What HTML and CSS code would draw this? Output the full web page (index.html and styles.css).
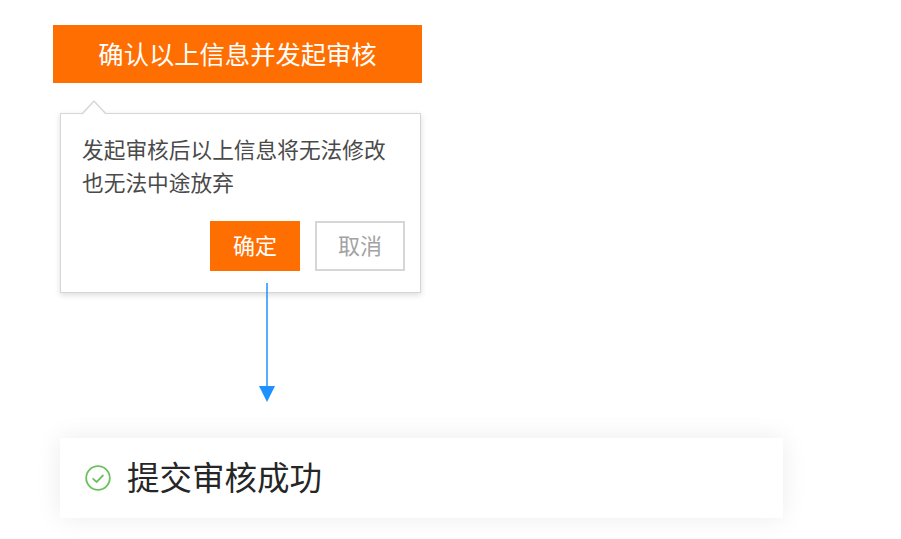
FILE: index.html
```html
<!DOCTYPE html>
<html lang="zh-CN">
<head>
<meta charset="utf-8">
<title>提交审核</title>
<link rel="stylesheet" href="styles.css">
</head>
<body>
<main class="page">
  <div class="submit-bar">确认以上信息并发起审核</div>
  <section class="popover">
    <svg class="caret" width="26" height="16" viewBox="0 0 26 16" aria-hidden="true">
      <path d="M1 15L13 2L25 15" fill="#fff" stroke="#d6d6d6" stroke-width="1.5"/>
    </svg>
    <p class="popover-text">发起审核后以上信息将无法修改<br>也无法中途放弃</p>
    <div class="popover-actions">
      <button class="btn btn-primary" type="button">确定</button>
      <button class="btn btn-ghost" type="button">取消</button>
    </div>
  </section>
  <svg class="flow-arrow" width="16" height="120" viewBox="0 0 16 120" aria-hidden="true">
    <path d="M8 0V105" stroke="#1e90ff" stroke-width="1.5" fill="none"/>
    <path d="M0 103H16L8 119Z" fill="#1e90ff"/>
  </svg>
  <div class="toast">
    <svg class="toast-icon" width="26" height="26" viewBox="0 0 26 26" aria-hidden="true">
      <circle cx="13" cy="13" r="11.8" fill="none" stroke="#6cc05f" stroke-width="1.8"/>
      <path d="M7.6 13.4L11.6 17L18.4 10" fill="none" stroke="#6cc05f" stroke-width="1.8"/>
    </svg>
    <span class="toast-text">提交审核成功</span>
  </div>
</main>
</body>
</html>
```
FILE: styles.css
```css
* { box-sizing: border-box; }
html, body { margin: 0; background: #fff; }
body { font-family: "Noto Sans CJK SC", "Liberation Sans", sans-serif; }
.page {
  display: flex;
  flex-direction: column;
  align-items: flex-start;
  width: 901px;
  height: 539px;
  padding: 25px 0 0 53px;
  overflow: hidden;
}
.submit-bar {
  width: 369px;
  height: 58px;
  background: #ff6e00;
  color: #fff;
  font-size: 25.3px;
  line-height: 56px;
  text-align: center;
}
.popover {
  position: relative;
  width: 361px;
  height: 180px;
  margin: 30px 0 0 7px;
  padding: 18px 15px 0 21px;
  background: #fff;
  border: 1.5px solid #d6d6d6;
  box-shadow: 0 2px 6px rgba(0, 0, 0, 0.14);
}
.caret { position: absolute; top: -15px; left: 20px; }
.popover-text {
  margin: 0;
  font-size: 21.7px;
  line-height: 33px;
  color: #4a4a4a;
}
.popover-actions {
  display: flex;
  justify-content: flex-end;
  gap: 15px;
  margin-top: 23px;
}
.btn {
  width: 90px;
  height: 50px;
  padding: 0 0 4px;
  border: 0;
  font-family: inherit;
  font-size: 22px;
}
.btn-primary { background: #ff6e00; color: #fff; }
.btn-ghost { background: #fff; color: #a3a3a3; border: 2px solid #d6d6d6; }
.flow-arrow { display: block; margin: -10px 0 0 206px; position: relative; }
.toast {
  display: flex;
  align-items: center;
  width: 723px;
  height: 80px;
  margin: 35px 0 0 7px;
  padding-left: 25px;
  background: #fff;
  box-shadow: 0 0 24px rgba(0, 0, 0, 0.08);
}
.toast-icon { flex: none; }
.toast-text {
  margin-left: 16px;
  padding-bottom: 4px;
  font-size: 32.5px;
  line-height: 76px;
  color: #262626;
}
```
